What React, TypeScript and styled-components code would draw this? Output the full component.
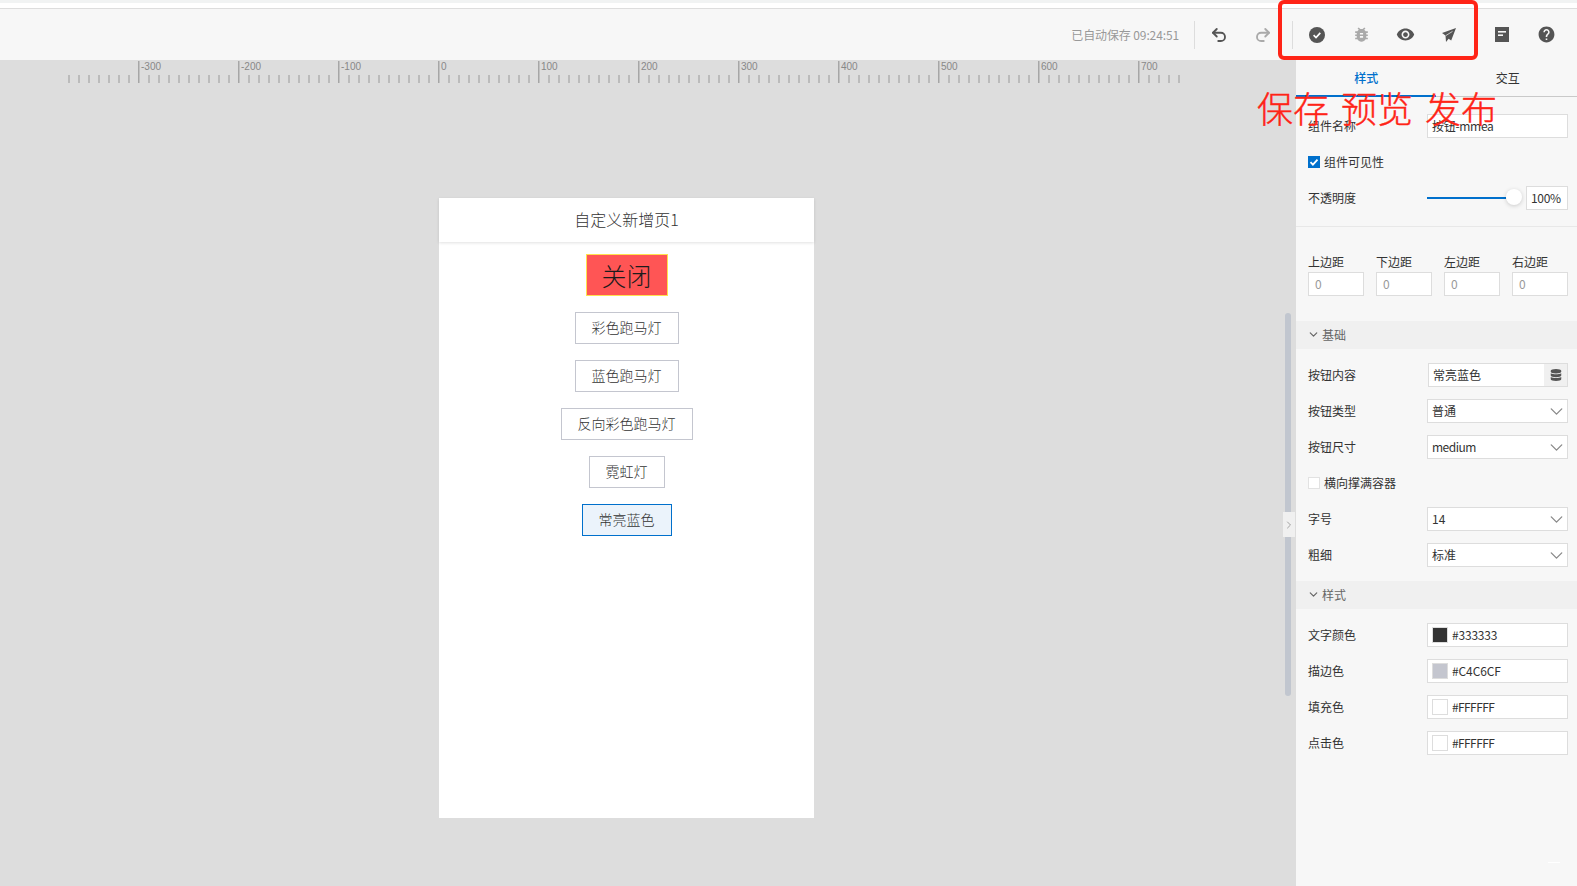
import React from 'react';

import styled, { createGlobalStyle } from 'styled-components';
import { ChevronDown, ChevronRight, Undo2, Redo2 } from 'lucide-react';
import { MdBugReport, MdVisibility, MdHelp } from 'react-icons/md';
import { FaDatabase } from 'react-icons/fa';

const GlobalStyle = createGlobalStyle`
  html, body {
    margin: 0;
    padding: 0;
    overflow: hidden;
  }

  body {
    font-family: "Noto Sans CJK SC", "Liberation Sans", sans-serif;
    font-size: 12px;
    color: #333;
  }
`;

const Page = styled.div`
  position: relative;
  width: 1577px;
  height: 886px;
  overflow: hidden;
  display: flex;
  flex-direction: column;
  background: #fff;
`;

const TopStrip = styled.div`
  height: 5px;
  border-top: 3px solid #f1f3f3;
  border-bottom: 1px solid #ddd;
  background: #fff;
`;

const Toolbar = styled.div`
  height: 51px;
  flex: none;
  display: flex;
  align-items: center;
  justify-content: flex-end;
  padding-right: 9px;
  background: #f7f7f7;
`;

const SaveStatus = styled.span`
  font-size: 12px;
  letter-spacing: -0.12px;
  color: #999;
  white-space: nowrap;
  margin-right: 15px;
`;

const ToolDivider = styled.span`
  width: 1px;
  height: 28px;
  background: #ddd;
`;

const ToolButton = styled.span<{ $muted?: boolean }>`
  width: 44px;
  height: 28px;
  display: flex;
  align-items: center;
  justify-content: center;
  color: ${(p) => (p.$muted ? '#aaa' : '#555')};
`;

const ToolGroup = styled.div<{ $gap: number; $left: number }>`
  display: flex;
  align-items: center;
  margin-left: ${(p) => p.$left}px;
  margin-right: ${(p) => p.$gap}px;
`;

const Main = styled.div`
  flex: 1;
  display: flex;
  min-height: 0;
`;

const Canvas = styled.div`
  position: relative;
  flex: 1;
  background: #ddd;
`;

const RulerSvg = styled.svg`
  display: block;
`;

const RulerLabel = styled.text`
  font-family: "Liberation Sans", sans-serif;
  font-size: 10px;
  fill: #888;
`;

const Phone = styled.div`
  width: 375px;
  height: 620px;
  margin: 108px 0 0 439px;
  background: #fff;
`;

const PhoneHeader = styled.div`
  height: 44px;
  display: flex;
  align-items: center;
  justify-content: center;
  padding-bottom: 2px;
  box-sizing: border-box;
  font-size: 16px;
  font-weight: 300;
  color: #333;
  box-shadow: 0 1px 3px rgba(0, 0, 0, 0.12);
`;

const PhoneBody = styled.div`
  display: flex;
  flex-direction: column;
  align-items: center;
  gap: 16px;
  padding-top: 12px;
`;

const CloseButton = styled.div`
  box-sizing: border-box;
  width: 82px;
  height: 42px;
  padding-bottom: 1px;
  display: flex;
  align-items: center;
  justify-content: center;
  border: 1px solid #ffe14d;
  background: #f55;
  color: #1c1c1c;
  font-size: 25px;
  font-weight: 300;
`;

const PageButton = styled.div<{ $selected?: boolean }>`
  box-sizing: border-box;
  height: 32px;
  padding: 0 16px 2px;
  display: flex;
  align-items: center;
  justify-content: center;
  border: 1px solid ${(p) => (p.$selected ? '#0070cc' : '#c4c6cf')};
  background: ${(p) => (p.$selected ? '#ebf3fb' : '#fff')};
  color: #333;
  font-size: 14px;
  font-weight: 300;
  white-space: nowrap;
`;

const ScrollThumb = styled.div`
  position: absolute;
  left: 1285px;
  top: 253px;
  width: 6px;
  height: 383px;
  border-radius: 3px;
  background: #c1c6cf;
`;

const CollapseHandle = styled.div`
  position: absolute;
  left: 1283px;
  top: 452px;
  width: 12px;
  height: 25px;
  display: flex;
  align-items: center;
  justify-content: center;
  background: #f0f0f0;
  color: #999;
`;

const Panel = styled.div`
  width: 281px;
  flex: none;
  background: #f7f7f7;
`;

const Tabs = styled.div`
  position: relative;
  height: 36px;
  display: flex;
  border-bottom: 1px solid #c9c9c9;
`;

const Tab = styled.div<{ $active?: boolean }>`
  position: relative;
  flex: 1;
  display: flex;
  align-items: center;
  justify-content: center;
  padding: 0 0 1px ${(p) => (p.$active ? 1 : 3)}px;
  color: ${(p) => (p.$active ? '#0070cc' : '#333')};
  font-weight: ${(p) => (p.$active ? 500 : 400)};

  ${(p) =>
    p.$active &&
    `&::after {
      content: '';
      position: absolute;
      left: 0;
      right: 0;
      bottom: -1px;
      height: 2px;
      background: #0070cc;
    }`}
`;

const Group = styled.div<{ $top: number; $bottom: number; $divider?: boolean }>`
  display: flex;
  flex-direction: column;
  gap: 12px;
  padding: ${(p) => p.$top}px 9px ${(p) => p.$bottom}px 12px;
  border-bottom: ${(p) => (p.$divider ? '1px solid #e8e8e8' : 'none')};
`;

const Row = styled.div`
  height: 24px;
  display: flex;
  align-items: center;
  justify-content: space-between;
`;

const CheckRow = styled.div`
  height: 24px;
  display: flex;
  align-items: center;
  gap: 4px;
`;

const Label = styled.span`
  color: #333;
  line-height: 18px;
  white-space: nowrap;
`;

const MarginLabel = styled(Label)`
  position: relative;
  top: -1px;
`;

const CheckBox = styled.span<{ $checked?: boolean }>`
  box-sizing: border-box;
  width: 12px;
  height: 12px;
  display: flex;
  align-items: center;
  justify-content: center;
  background: ${(p) => (p.$checked ? '#0070cc' : '#fff')};
  border: 1px solid ${(p) => (p.$checked ? '#0070cc' : '#e2e2e2')};
`;

const Field = styled.div<{ $width?: number; $muted?: boolean }>`
  box-sizing: border-box;
  width: ${(p) => p.$width ?? 141}px;
  height: 24px;
  display: flex;
  align-items: center;
  padding-left: ${(p) => (p.$muted ? 6 : 4)}px;
  border: 1px solid #ddd;
  background: #fff;
  color: ${(p) => (p.$muted ? '#999' : '#333')};
  white-space: nowrap;
`;

const FieldText = styled.span<{ $tight?: number }>`
  flex: 1;
  line-height: 22px;
  letter-spacing: ${(p) => p.$tight ?? 0}px;
`;

const Addon = styled.span`
  width: 23px;
  height: 22px;
  display: flex;
  align-items: center;
  justify-content: center;
  background: #f0f0f0;
  color: #555;
`;

const SelectCaret = styled.span`
  display: flex;
  color: #888;
`;

const Swatch = styled.span<{ $color: string }>`
  box-sizing: border-box;
  width: 16px;
  height: 16px;
  margin-right: 4px;
  border: 1px solid #ddd;
  background: ${(p) => p.$color};
`;

const SliderCluster = styled.div`
  width: 141px;
  display: flex;
  align-items: center;
  justify-content: space-between;
`;

const SliderTrack = styled.div`
  position: relative;
  width: 79px;
  height: 2px;
  background: #0070cc;
`;

const SliderThumb = styled.span`
  position: absolute;
  left: 79px;
  top: -8px;
  width: 16px;
  height: 16px;
  border-radius: 50%;
  background: #fff;
  box-shadow: 0 1px 4px rgba(0, 0, 0, 0.18);
`;

const MarginGrid = styled.div`
  display: grid;
  grid-template-columns: repeat(4, 56px);
  column-gap: 12px;
`;

const MarginCell = styled.div`
  display: flex;
  flex-direction: column;
`;

const SectionHeader = styled.div`
  height: 28px;
  box-sizing: border-box;
  padding: 0 0 2px 11px;
  display: flex;
  align-items: center;
  gap: 2px;
  background: #f0f0f0;
  color: #666;
`;

const Annotation = styled.div`
  position: absolute;
  left: 1278px;
  top: 0;
  box-sizing: border-box;
  width: 200px;
  height: 60px;
  border: 4px solid #ff2417;
  border-radius: 6px;
`;

const AnnotationText = styled.div`
  position: absolute;
  left: 1257px;
  top: 82px;
  color: #ff2417;
  font-size: 36px;
  font-weight: 300;
  line-height: 50px;
  white-space: nowrap;
  word-spacing: 4px;
  -webkit-text-stroke: 0.4px #ff2417;
`;

const FaintMark = styled.span`
  position: absolute;
  left: 1548px;
  top: 862px;
  width: 12px;
  height: 1px;
  background: #fff;
`;

function Ruler() {
  const ticks: number[] = [];
  for (let x = 69; x <= 1179; x += 10) ticks.push(x);

  return (
    <RulerSvg width="1296" height="30" viewBox="0 0 1296 30">
      {ticks.map((x) => {
        const major = (x - 139) % 100 === 0;
        return (
          <rect
            key={x}
            x={x - 1}
            y={major ? 1 : 15}
            width={major ? 1.5 : 2}
            height={major ? 22 : 8}
            fill={major ? '#a6a6a6' : '#bbb'}
          />
        );
      })}
      {[-300, -200, -100, 0, 100, 200, 300, 400, 500, 600, 700].map((n) => (
        <RulerLabel key={n} x={439 + n + 2} y={10}>
          {n}
        </RulerLabel>
      ))}
    </RulerSvg>
  );
}

const CheckCircleIcon = () => (
  <svg width="16" height="16" viewBox="0 0 16 16">
    <circle cx="8" cy="8" r="8" fill="currentColor" />
    <path d="M4.6 8.2l2.4 2.3 4.3-4.6" fill="none" stroke="#fff" strokeWidth="1.7" />
  </svg>
);

const PlaneIcon = () => (
  <svg width="16" height="16" viewBox="0 0 16 16">
    <path d="M15 1L1 6l3.5 2.6L5 15l2.6-3.2 2.6 1.8z" fill="currentColor" />
    <path d="M4.8 8.6L11.5 4.4" fill="none" stroke="#f7f7f7" strokeWidth=".7" />
  </svg>
);

const DocIcon = () => (
  <svg width="14" height="15" viewBox="0 0 14 15">
    <rect width="14" height="15" fill="currentColor" />
    <rect x="3" y="4" width="8" height="1.6" fill="#f7f7f7" />
    <rect x="3" y="7.4" width="5" height="1.6" fill="#f7f7f7" />
  </svg>
);

const Tick = () => (
  <svg width="10" height="10" viewBox="0 0 10 10">
    <path d="M1.5 5.2l2.4 2.4 4.6-5" fill="none" stroke="#fff" strokeWidth="1.8" />
  </svg>
);

function Select({ value, tight }: { value: string; tight?: number }) {
  return (
    <Field>
      <FieldText $tight={tight}>{value}</FieldText>
      <SelectCaret>
        <ChevronDown size={21} strokeWidth={1.5} />
      </SelectCaret>
    </Field>
  );
}

function ColorField({ color, tight }: { color: string; tight: number }) {
  return (
    <Field>
      <Swatch $color={color} />
      <FieldText $tight={tight}>{color}</FieldText>
    </Field>
  );
}

function Section({ title }: { title: string }) {
  return (
    <SectionHeader>
      <ChevronDown size={13} strokeWidth={2.2} />
      {title}
    </SectionHeader>
  );
}

const pageButtons = ['彩色跑马灯', '蓝色跑马灯', '反向彩色跑马灯', '霓虹灯'];
const margins = ['上边距', '下边距', '左边距', '右边距'];

function App() {
  return (
    <Page>
      <GlobalStyle />
      <TopStrip />
      <Toolbar>
        <SaveStatus>已自动保存 09:24:51</SaveStatus>
        <ToolDivider />
        <ToolGroup $left={2} $gap={7}>
          <ToolButton>
            <Undo2 size={18} strokeWidth={2.5} />
          </ToolButton>
          <ToolButton $muted>
            <Redo2 size={18} strokeWidth={2.5} />
          </ToolButton>
        </ToolGroup>
        <ToolDivider />
        <ToolGroup $left={2} $gap={9}>
          <ToolButton>
            <CheckCircleIcon />
          </ToolButton>
          <ToolButton $muted>
            <MdBugReport size={19} />
          </ToolButton>
          <ToolButton>
            <MdVisibility size={19} />
          </ToolButton>
          <ToolButton>
            <PlaneIcon />
          </ToolButton>
        </ToolGroup>
        <ToolButton>
          <DocIcon />
        </ToolButton>
        <ToolButton>
          <MdHelp size={19} />
        </ToolButton>
      </Toolbar>
      <Main>
        <Canvas>
          <Ruler />
          <Phone>
            <PhoneHeader>自定义新增页1</PhoneHeader>
            <PhoneBody>
              <CloseButton>关闭</CloseButton>
              {pageButtons.map((text) => (
                <PageButton key={text}>{text}</PageButton>
              ))}
              <PageButton $selected>常亮蓝色</PageButton>
            </PhoneBody>
          </Phone>
          <ScrollThumb />
          <CollapseHandle>
            <ChevronRight size={14} strokeWidth={1.8} />
          </CollapseHandle>
        </Canvas>
        <Panel>
          <Tabs>
            <Tab $active>样式</Tab>
            <Tab>交互</Tab>
          </Tabs>
          <Group $top={17} $bottom={16} $divider>
            <Row>
              <Label>组件名称</Label>
              <Field>
                <FieldText $tight={-0.3}>按钮-mmea</FieldText>
              </Field>
            </Row>
            <CheckRow>
              <CheckBox $checked>
                <Tick />
              </CheckBox>
              <Label>组件可见性</Label>
            </CheckRow>
            <Row>
              <Label>不透明度</Label>
              <SliderCluster>
                <SliderTrack>
                  <SliderThumb />
                </SliderTrack>
                <Field $width={42}>
                  <FieldText $tight={-0.3}>100%</FieldText>
                </Field>
              </SliderCluster>
            </Row>
          </Group>
          <Group $top={27} $bottom={25}>
            <MarginGrid>
              {margins.map((label) => (
                <MarginCell key={label}>
                  <MarginLabel>{label}</MarginLabel>
                  <Field $width={56} $muted>
                    <FieldText>0</FieldText>
                  </Field>
                </MarginCell>
              ))}
            </MarginGrid>
          </Group>
          <Section title="基础" />
          <Group $top={14} $bottom={14}>
            <Row>
              <Label>按钮内容</Label>
              <Field $width={140}>
                <FieldText>常亮蓝色</FieldText>
                <Addon>
                  <FaDatabase size={12} />
                </Addon>
              </Field>
            </Row>
            <Row>
              <Label>按钮类型</Label>
              <Select value="普通" />
            </Row>
            <Row>
              <Label>按钮尺寸</Label>
              <Select value="medium" tight={-0.5} />
            </Row>
            <CheckRow>
              <CheckBox />
              <Label>横向撑满容器</Label>
            </CheckRow>
            <Row>
              <Label>字号</Label>
              <Select value="14" />
            </Row>
            <Row>
              <Label>粗细</Label>
              <Select value="标准" />
            </Row>
          </Group>
          <Section title="样式" />
          <Group $top={14} $bottom={14}>
            <Row>
              <Label>文字颜色</Label>
              <ColorField color="#333333" tight={-0.2} />
            </Row>
            <Row>
              <Label>描边色</Label>
              <ColorField color="#C4C6CF" tight={-0.1} />
            </Row>
            <Row>
              <Label>填充色</Label>
              <ColorField color="#FFFFFF" tight={-0.6} />
            </Row>
            <Row>
              <Label>点击色</Label>
              <ColorField color="#FFFFFF" tight={-0.6} />
            </Row>
          </Group>
        </Panel>
      </Main>
      <Annotation />
      <AnnotationText>保存 预览 发布</AnnotationText>
      <FaintMark />
    </Page>
  );
}

export default App;
